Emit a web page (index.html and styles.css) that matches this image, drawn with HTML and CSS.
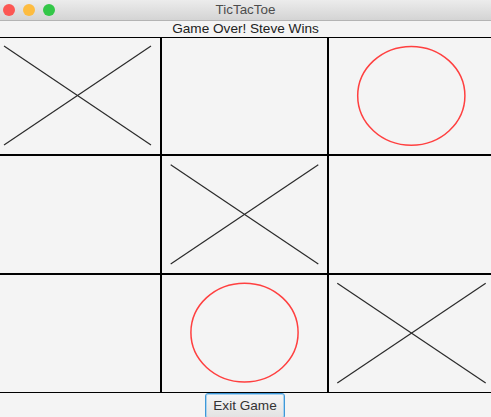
FILE: index.html
```html
<!DOCTYPE html>
<html>
<head>
<meta charset="utf-8">
<link rel="stylesheet" href="styles.css">
</head>
<body>
<div class="window">
  <div class="titlebar">
    <div class="lights">
      <span class="light red"></span>
      <span class="light yellow"></span>
      <span class="light green"></span>
    </div>
    <div class="title">TicTacToe</div>
  </div>
  <div class="status">Game Over! Steve Wins</div>
  <div class="board">
    <div class="cell"><svg class="mark" width="160" height="116"><line x1="4" y1="8" x2="151" y2="107"/><line x1="4" y1="107" x2="151" y2="8"/></svg></div>
    <div class="cell"></div>
    <div class="cell"><svg class="mark o" width="162" height="116"><ellipse cx="82.3" cy="57.8" rx="53.6" ry="49.4"/></svg></div>
    <div class="cell"></div>
    <div class="cell"><svg class="mark" width="165" height="117"><line x1="8.7" y1="8.7" x2="156.3" y2="108"/><line x1="8.7" y1="108" x2="156.3" y2="8.7"/></svg></div>
    <div class="cell"></div>
    <div class="cell"></div>
    <div class="cell"><svg class="mark o" width="165" height="117"><ellipse cx="82.5" cy="57.6" rx="53.6" ry="49.4"/></svg></div>
    <div class="cell"><svg class="mark" width="162" height="117"><line x1="8.3" y1="8.3" x2="156.7" y2="108"/><line x1="8.3" y1="108" x2="156.7" y2="8.3"/></svg></div>
  </div>
  <div class="actions">
    <button class="btn">Exit Game</button>
  </div>
</div>
</body>
</html>
```

FILE: styles.css
```css
html, body {
  margin: 0;
  padding: 0;
  background: #f4f4f4;
  font-family: "Liberation Sans", Arial, sans-serif;
}
.window {
  width: 491px;
  height: 417px;
  overflow: hidden;
  display: flex;
  flex-direction: column;
  background: #f4f4f4;
}
.titlebar {
  height: 20px;
  border-bottom: 1px solid #b4b4b4;
  background: linear-gradient(#ececec, #d4d4d4);
  display: flex;
  align-items: center;
  justify-content: center;
  position: relative;
}
.lights {
  position: absolute;
  left: 3px;
  top: 4px;
  display: flex;
  gap: 8px;
}
.light {
  width: 12px;
  height: 12px;
  border-radius: 50%;
  display: block;
}
.red { background: #fc5753; }
.yellow { background: #fdbc40; }
.green { background: #33c748; }
.title {
  font-size: 13.4px;
  color: #4d4d4d;
  line-height: 20px;
}
.status {
  height: 17px;
  line-height: 16px;
  text-align: center;
  font-size: 13.6px;
  color: #222;
}
.board {
  display: grid;
  grid-template-columns: 160px 165px 162px;
  grid-template-rows: 116px 117px 117px;
  column-gap: 2px;
  row-gap: 2px;
  background: #000;
  border-top: 1px solid #000;
  border-bottom: 1px solid #000;
  width: 491px;
}
.cell {
  background: #f4f4f4;
  overflow: hidden;
}
.mark {
  display: block;
}
.mark line {
  stroke: #2a2a2a;
  stroke-width: 1.2;
}
.mark.o ellipse {
  fill: none;
  stroke: #ff4040;
  stroke-width: 1.5;
}
.actions {
  display: flex;
  justify-content: center;
}
.btn {
  margin: 0 1px 0 0;
  width: 80px;
  height: 26px;
  font-family: "Liberation Sans", Arial, sans-serif;
  font-size: 13.6px;
  color: #333;
  background: linear-gradient(#f6f6f6, #e2e2e2);
  border: 1px solid #3d98d8;
  border-radius: 3px;
  box-shadow: inset 0 0 0 1px #a9d1ee;
  padding: 0;
  line-height: 22px;
  text-align: center;
}
```
